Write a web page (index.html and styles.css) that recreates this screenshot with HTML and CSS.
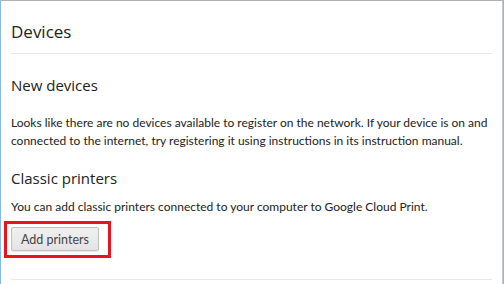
FILE: index.html
```html
<!DOCTYPE html>
<html>
<head>
<meta charset="utf-8">
<link rel="stylesheet" href="styles.css">
</head>
<body>
<div class="window">
  <div class="page">
    <div class="content">
      <h1 class="title">Devices</h1>
      <div class="rule"></div>
      <section class="section">
        <h2 class="subtitle">New devices</h2>
        <p class="text">Looks like there are no devices available to register on the network. If your device is on and connected to the internet, try registering it using instructions in its instruction manual.</p>
      </section>
      <section class="section classic">
        <h2 class="subtitle">Classic printers</h2>
        <p class="text">You can add classic printers connected to your computer to Google Cloud Print.</p>
        <div class="highlight">
          <button class="btn">Add printers</button>
        </div>
      </section>
      <div class="rule bottom"></div>
    </div>
  </div>
</div>
</body>
</html>
```

FILE: styles.css
```css
html, body {
  margin: 0;
  padding: 0;
  background: #ffffff;
}
body {
  font-family: "Open Sans", "Noto Sans", sans-serif;
  color: #303030;
}
.window {
  width: 504px;
  height: 284px;
  box-sizing: border-box;
  border-left: 1px solid #86b9ec;
  border-right: 1px solid #86b9ec;
  overflow: hidden;
}
.page {
  height: 100%;
  box-sizing: border-box;
  border-top: 1px solid #b0b0b0;
  border-right: 1px solid #c8c8c8;
}
.content {
  padding: 0 10px 0 10px;
  width: 481px;
}
.title {
  margin: 0;
  padding-top: 19px;
  font-size: 17px;
  font-weight: 400;
  line-height: 24px;
  color: #222;
}
.rule {
  height: 1px;
  background: #e8e8e8;
  margin-top: 9px;
}
.subtitle {
  margin: 0;
  font-size: 15px;
  font-weight: 400;
  line-height: 20px;
  color: #222;
}
.section {
  padding-top: 21px;
}
.text {
  margin: 19px 0 0 0;
  font-family: "Lato", "Open Sans", sans-serif;
  font-size: 12px;
  line-height: 18px;
  color: #222;
}
.classic {
  padding-top: 18px;
}
.classic .text {
  margin-top: 10px;
}
.highlight {
  display: inline-block;
  margin: 5px 0 0 -7px;
  border: 3px solid #e8141e;
  padding: 3px 9px 4px 4px;
}
.btn {
  display: block;
  height: 24px;
  width: 88px;
  padding: 0;
  font-family: "Lato", "Open Sans", sans-serif;
  font-size: 12.5px;
  color: #444;
  background: linear-gradient(#f0f0f0, #e4e4e4);
  border: 1px solid #c0c0c0;
  border-radius: 2px;
  box-shadow: 0 1px 0 rgba(0,0,0,0.08);
}
.bottom {
  margin-top: 21px;
}
```
